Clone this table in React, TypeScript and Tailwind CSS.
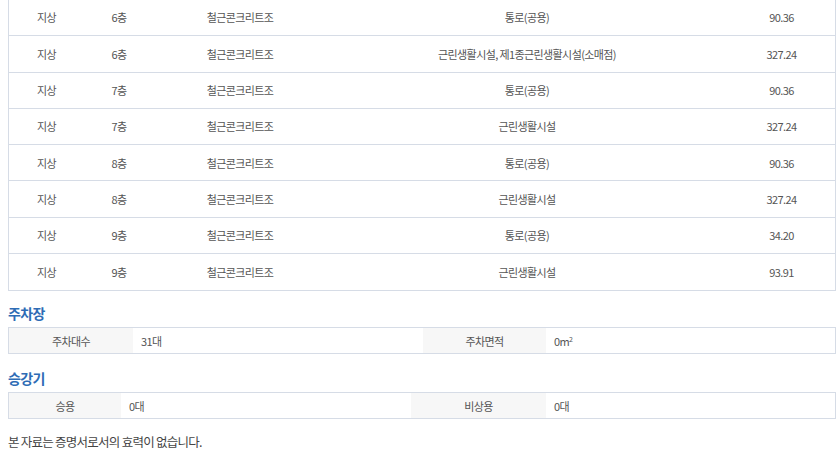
import React from 'react';

const rows = [
  { kind: '지상', floor: '6층', struct: '철근콘크리트조', use: '통로(공용)', area: '90.36' },
  { kind: '지상', floor: '6층', struct: '철근콘크리트조', use: '근린생활시설, 제1종근린생활시설(소매점)', area: '327.24' },
  { kind: '지상', floor: '7층', struct: '철근콘크리트조', use: '통로(공용)', area: '90.36' },
  { kind: '지상', floor: '7층', struct: '철근콘크리트조', use: '근린생활시설', area: '327.24' },
  { kind: '지상', floor: '8층', struct: '철근콘크리트조', use: '통로(공용)', area: '90.36' },
  { kind: '지상', floor: '8층', struct: '철근콘크리트조', use: '근린생활시설', area: '327.24' },
  { kind: '지상', floor: '9층', struct: '철근콘크리트조', use: '통로(공용)', area: '34.20' },
  { kind: '지상', floor: '9층', struct: '철근콘크리트조', use: '근린생활시설', area: '93.91' },
];

const font = { fontFamily: '"Noto Sans CJK KR", "Noto Sans", sans-serif' };

type InfoProps = {
  l1: string;
  v1: string;
  l2: string;
  v2: React.ReactNode;
  w1: string;
  w2: string;
};

const InfoRow: React.FC<InfoProps> = ({ l1, v1, l2, v2, w1, w2 }) => (
  <div className="ml-2 flex h-[27px] w-[828px] border border-[#d6dce6] text-[11px] tracking-[-0.6px] text-[#555]">
    <div className={`flex ${w1} items-center justify-center bg-[#f7f7f7]`}>{l1}</div>
    <div className="flex flex-1 items-center pl-2">{v1}</div>
    <div className={`flex ${w2} items-center justify-center bg-[#f7f7f7]`}>{l2}</div>
    <div className="flex w-[289px] items-center pl-2">{v2}</div>
  </div>
);

export default function App() {
  return (
    <div className="h-[452px] w-[840px] overflow-hidden bg-white" style={font}>
      <div className="ml-2 w-[828px] border-x border-b border-[#d6dce6] text-[11px] tracking-[-0.6px] text-[#555]">
        {rows.map((r, i) => (
          <div
            key={i}
            className={`flex h-[36.3px] items-center ${i < rows.length - 1 ? 'border-b border-[#d6dce6]' : ''}`}
          >
            <div className="w-[75px] text-center">{r.kind}</div>
            <div className="w-[70px] text-center">{r.floor}</div>
            <div className="w-[172px] text-center">{r.struct}</div>
            <div className="w-[402px] text-center">{r.use}</div>
            <div className="flex-1 text-center">{r.area}</div>
          </div>
        ))}
      </div>

      <h3 className="ml-2 mt-[11px] mb-[3px] text-[14px] font-bold leading-[22px] tracking-[-0.6px] text-[#2e6cb5]">주차장</h3>
      <InfoRow l1="주차대수" v1="31대" l2="주차면적" v2={<span>0m<sup className="text-[7px]">2</sup></span>} w1="w-[124px]" w2="w-[123px]" />

      <h3 className="ml-2 mt-[13px] mb-[3px] text-[14px] font-bold leading-[22px] tracking-[-0.6px] text-[#2e6cb5]">승강기</h3>
      <InfoRow l1="승용" v1="0대" l2="비상용" v2="0대" w1="w-[112px]" w2="w-[135px]" />

      <p className="ml-2 mt-[13px] text-[12.5px] leading-[19px] tracking-[-0.75px] text-[#444]">본 자료는 증명서로서의 효력이 없습니다.</p>
    </div>
  );
}
